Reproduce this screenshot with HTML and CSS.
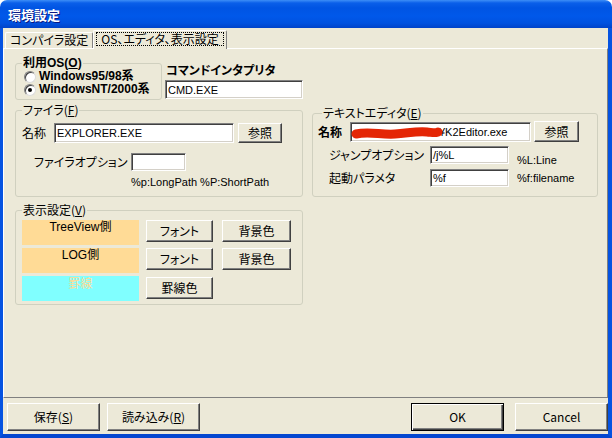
FILE: index.html
```html
<!DOCTYPE html>
<html lang="ja">
<head>
<meta charset="utf-8">
<title>環境設定</title>
<link rel="stylesheet" href="styles.css">
</head>
<body>
<div class="window">
  <div class="titlebar"><span class="title">環境設定</span></div>
  <div class="client">
    <div class="tabs">
      <div class="tab">コンパイラ設定</div>
      <div class="tab active"><span class="focus">OS、エディタ、表示設定</span></div>
    </div>
    <div class="panel">
      <div class="col col-left">
        <div class="toprow">
          <fieldset class="group os">
            <legend class="bold">利用OS(<u>O</u>)</legend>
            <div class="os-body">
              <div class="radio-row"><span class="radio"></span><span class="bold">Windows95/98系</span></div>
              <div class="radio-row"><span class="radio checked"></span><span class="bold">WindowsNT/2000系</span></div>
            </div>
          </fieldset>
          <div class="cmd">
            <div class="cmd-label bold">コマンドインタプリタ</div>
            <div class="field cmd-field">CMD.EXE</div>
          </div>
        </div>
        <fieldset class="group filer">
          <legend>ファイラ(<u>F</u>)</legend>
          <div class="filer-body">
            <div class="row">
              <span class="lbl name-lbl">名称</span>
              <div class="field filer-name">EXPLORER.EXE</div>
              <button class="btn ref">参照</button>
            </div>
            <div class="row opt-row">
              <span class="lbl opt-lbl">ファイラオプション</span>
              <div class="field opt-field"></div>
            </div>
            <div class="hint filer-hint">%p:LongPath %P:ShortPath</div>
          </div>
        </fieldset>
        <fieldset class="group disp">
          <legend>表示設定(<u>V</u>)</legend>
          <div class="disp-body">
            <div class="disp-row">
              <div class="swatch peach">TreeView側</div>
              <button class="btn font-btn">フォント</button>
              <button class="btn bg-btn">背景色</button>
            </div>
            <div class="disp-row">
              <div class="swatch peach">LOG側</div>
              <button class="btn font-btn">フォント</button>
              <button class="btn bg-btn">背景色</button>
            </div>
            <div class="disp-row">
              <div class="swatch cyan">罫線</div>
              <button class="btn font-btn line-btn">罫線色</button>
            </div>
          </div>
        </fieldset>
      </div>
      <div class="col col-right">
        <fieldset class="group editor">
          <legend>テキストエディタ(<u>E</u>)</legend>
          <div class="editor-body">
            <div class="row ed-row1">
              <span class="lbl ed-name bold">名称</span>
              <div class="field ed-field">¥K2Editor.exe
                <svg class="scribble" width="92" height="16" viewBox="0 0 92 16"><path d="M5 9 C 18 6, 30 10, 44 9 S 66 6, 76 7 S 84 8, 87 7" fill="none" stroke="#E42606" stroke-width="9" stroke-linecap="round"/></svg>
              </div>
              <button class="btn ed-ref">参照</button>
            </div>
            <div class="row ed-row2">
              <span class="lbl ed-lbl">ジャンプオプション</span>
              <div class="field ed-small">/j%L</div>
              <span class="hint ed-hint hint-low">%L:Line</span>
            </div>
            <div class="row ed-row3">
              <span class="lbl ed-lbl">起動パラメタ</span>
              <div class="field ed-small">%f</div>
              <span class="hint ed-hint">%f:filename</span>
            </div>
          </div>
        </fieldset>
      </div>
    </div>
    <div class="actions">
      <button class="btn act">保存(<u>S</u>)</button>
      <button class="btn act">読み込み(<u>R</u>)</button>
      <span class="spacer"></span>
      <button class="btn act default">OK</button>
      <button class="btn act cancel">Cancel</button>
    </div>
  </div>
</div>
</body>
</html>
```

FILE: styles.css
```css
* { box-sizing: border-box; }
html, body { margin: 0; padding: 0; }
body {
  width: 612px;
  height: 438px;
  overflow: hidden;
  background: #ffffff;
  font-family: "Liberation Sans", "Noto Sans CJK JP", sans-serif;
  font-size: 12px;
  line-height: 14px;
  font-feature-settings: "palt";
  color: #000;
}
.window {
  width: 612px;
  height: 438px;
  display: flex;
  flex-direction: column;
}
.titlebar {
  height: 28px;
  flex: none;
  display: flex;
  align-items: center;
  padding: 1px 0 0 8px;
  border-radius: 7px 7px 0 0;
  background: linear-gradient(to bottom, #3d8ef7 0px, #0a5fe9 3px, #0054e3 8px, #0058ea 16px, #0052e0 23px, #0043c9 28px);
}
.title {
  color: #fff;
  font-family: "Noto Sans CJK JP", sans-serif;
  font-weight: bold;
  font-size: 13px;
  line-height: 14px;
  text-shadow: 1px 1px 0 #0a1883;
}
.client {
  flex: 1;
  display: flex;
  flex-direction: column;
  background: #ece9d8;
  border-left: 3px solid #0553e1;
  border-right: 4px solid #0553e1;
  border-bottom: 4px solid #0447d0;
}
.bold {
  font-family: "Liberation Sans", "Noto Sans CJK JP", sans-serif;
  font-weight: bold;
}
u { text-decoration: underline; text-underline-offset: 1px; }

/* tabs */
.tabs {
  height: 20px;
  flex: none;
  display: flex;
  align-items: flex-end;
  padding-left: 2px;
  position: relative;
  z-index: 1;
}
.tab {
  height: 16px;
  padding: 0 4px;
  border: 1px solid;
  border-color: #fff #808080 transparent #fff;
  border-bottom: 0;
  border-radius: 2px 2px 0 0;
  line-height: 14px;
  font-family: "Noto Sans CJK JP", sans-serif;
  white-space: nowrap;
}
.tab.active {
  height: 19px;
  margin-bottom: -1px;
  padding: 1px 2px 0 2px;
  background: #ece9d8;
}
.focus {
  display: block;
  height: 14px;
  line-height: 12px;
  padding: 0 4px;
  border: 1px dotted #000;
}

/* panel */
.panel {
  height: 350px;
  flex: none;
  display: flex;
  padding: 8px 9px 0 11px;
  border: 1px solid;
  border-color: #fff #808080 #808080 #fff;
}
.col-left { width: 288px; flex: none; }
.col-right { flex: 1; margin-left: 9px; padding-top: 50px; }

.group {
  margin: 0;
  padding: 0;
  border: 1px solid #d0d0bf;
  border-radius: 3px;
  min-width: 0;
}
.group legend {
  margin-left: 6px;
  padding: 0 1px;
  line-height: 12px;
  font-family: "Noto Sans CJK JP", sans-serif;
}
.group legend.bold { font-family: "Liberation Sans", "Noto Sans CJK JP", sans-serif; }

.toprow { display: flex; align-items: flex-start; }
.os { width: 147px; flex: none; }
.os-body { padding: 1px 0 3px 8px; }
.radio-row {
  height: 13px;
  display: flex;
  align-items: center;
  line-height: 13px;
  white-space: nowrap;
}
.radio {
  width: 12px;
  height: 12px;
  margin-right: 3px;
  border-radius: 50%;
  background: #fff;
  border: 1px solid;
  border-color: #808080 #dcdcdc #dcdcdc #808080;
  box-shadow: inset 1px 1px 0 #404040;
  display: flex;
  align-items: center;
  justify-content: center;
  flex: none;
}
.radio.checked::after {
  content: "";
  width: 4px;
  height: 4px;
  border-radius: 50%;
  background: #000;
}
.cmd { margin-left: 3px; width: 138px; flex: none; }
.cmd-label { margin: 7px 0 0 1px; line-height: 14px; white-space: nowrap; }
.field {
  position: relative;
  background: #fff;
  border: 1px solid;
  border-color: #808080 #fff #fff #808080;
  box-shadow: inset 1px 1px 0 #404040, inset -1px -1px 0 #d4d0c8;
  padding: 0 0 0 2px;
  white-space: nowrap;
  overflow: hidden;
  display: flex;
  align-items: center;
  font-size: 11px;
}
.cmd-field { margin-top: 2px; height: 19px; }

.filer { margin-top: 4px; }
.filer-body { padding: 7px 0 8px 6px; }
.row { display: flex; align-items: center; white-space: nowrap; }
.lbl { font-family: "Noto Sans CJK JP", sans-serif; flex: none; }
.name-lbl { width: 32px; }
.filer-name { width: 180px; height: 20px; }
.btn {
  font: inherit;
  margin: 0;
  padding: 0;
  color: #000;
  background: #ece9d8;
  border: 1px solid;
  border-color: #fff #404040 #404040 #fff;
  box-shadow: inset -1px -1px 0 #808080;
  display: flex;
  align-items: center;
  justify-content: center;
  white-space: nowrap;
  font-family: "Noto Sans CJK JP", sans-serif;
  flex: none;
}
.ref { width: 44px; height: 20px; margin-left: 4px; }
.opt-row { margin-top: 10px; }
.opt-lbl { width: 97px; margin-left: 12px; }
.opt-field { width: 55px; height: 18px; }
.hint { line-height: 12px; white-space: nowrap; font-size: 11px; }
.filer-hint { margin: 5px 0 0 109px; }

.disp { margin-top: 7px; }
.disp-body { padding: 4px 0 3px 6px; }
.disp-row { display: flex; align-items: flex-start; height: 25px; }
.disp-row + .disp-row { margin-top: 3px; }
.swatch {
  width: 117px;
  height: 25px;
  text-align: center;
  line-height: 14px;
  flex: none;
}
.peach { background: #ffdb96; }
.cyan { background: #80ffff; color: #ffdb96; font-family: "Noto Sans CJK JP", sans-serif; }
.font-btn { width: 67px; height: 22px; margin-left: 7px; }
.bg-btn { width: 69px; height: 22px; margin-left: 9px; }
.line-btn { margin-top: 1px; }

.editor legend { margin-left: 9px; }
.editor-body { padding: 2px 0 9px 5px; }
.ed-name { width: 32px; }
.ed-field { width: 181px; height: 20px; padding-left: 88px; }
.scribble { position: absolute; left: 0; top: 2px; }
.ed-ref { width: 45px; height: 21px; margin-left: 3px; }
.ed-row2 { margin-top: 4px; }
.ed-row3 { margin-top: 5px; }
.ed-lbl { width: 101px; margin-left: 11px; }
.ed-small { width: 79px; height: 18px; }
.ed-hint { margin-left: 8px; }
.hint-low { align-self: flex-end; margin-bottom: -2px; }

/* bottom buttons */
.actions {
  flex: 1;
  display: flex;
  align-items: flex-start;
  padding: 5px 0 0 4px;
}
.act { width: 93px; height: 28px; }
.act + .act { margin-left: 7px; }
.spacer { flex: 1; }
.default {
  border: 1px solid #000;
  box-shadow: inset 1px 1px 0 #fff, inset -1px -1px 0 #404040, inset -2px -2px 0 #808080;
}
.act.cancel { margin-left: 11px; }
```
